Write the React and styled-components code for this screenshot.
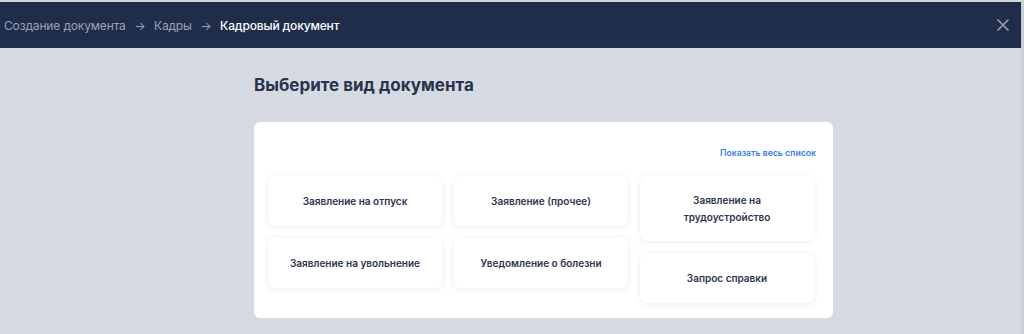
import React from 'react';
import styled, { createGlobalStyle } from 'styled-components';

const Global = createGlobalStyle`
  html, body {
    margin: 0;
    padding: 0;
    font-family: Inter, "Noto Sans", sans-serif;
    background: #d6dae3;
  }
`;

const Page = styled.div`
  height: 334px;
  background: #d6dae3;
  border-top: 2px solid #d4d6db;
  border-right: 3px solid #c9cdd5;
  box-sizing: border-box;
  overflow: hidden;
`;

const Header = styled.header`
  height: 46px;
  background: #1f2c4a;
  display: flex;
  align-items: center;
  justify-content: space-between;
  padding: 0 12px 0 4px;
`;

const Crumbs = styled.nav`
  display: flex;
  align-items: center;
  gap: 8.5px;
  font-size: 12px;
  letter-spacing: -0.15px;
`;

const Crumb = styled.span`
  color: ${(p) => (p.$current ? '#ffffff' : '#9aa3b4')};
  font-weight: ${(p) => (p.$current ? 500 : 400)};
`;

const Arrow = styled.span`
  color: #9aa3b4;
  font-size: 12px;
`;

const Close = styled.button`
  border: 0;
  background: none;
  padding: 0;
  display: flex;
  color: #9aa3b4;
  cursor: pointer;
`;

const Main = styled.main`
  width: 579px;
  margin-left: 254px;
  padding-top: 26px;
`;

const Title = styled.h1`
  margin: 0 0 26px;
  font-size: 17px;
  line-height: 22px;
  font-weight: 700;
  color: #28334d;
`;

const Card = styled.section`
  background: #fff;
  border-radius: 6px;
  padding: 25px 20px 15px 14px;
`;

const LinkRow = styled.div`
  display: flex;
  justify-content: flex-end;
  margin: 0 -3px 17px 0;
`;

const ShowAll = styled.a`
  font-size: 8.7px;
  line-height: 12px;
  font-weight: 600;
  color: #3b7cf0;
  text-decoration: none;
`;

const Grid = styled.div`
  display: grid;
  grid-template-columns: repeat(3, 174px);
  column-gap: 12px;
  align-items: start;
`;

const Column = styled.div`
  display: flex;
  flex-direction: column;
  gap: 12px;
`;

const Tile = styled.button`
  min-height: 50px;
  padding: 16px 12px;
  border: 0;
  border-radius: 7px;
  background: #fff;
  box-shadow: 0 1px 6px rgba(30, 40, 70, 0.09);
  display: flex;
  align-items: center;
  justify-content: center;
  text-align: center;
  font-family: inherit;
  font-size: 10px;
  line-height: 16.5px;
  font-weight: 600;
  color: #2b3550;
  cursor: pointer;
`;

const columns = [
  ['Заявление на отпуск', 'Заявление на увольнение'],
  ['Заявление (прочее)', 'Уведомление о болезни'],
  ['Заявление на трудоустройство', 'Запрос справки'],
];

export default function App() {
  return (
    <Page>
      <Global />
      <Header>
        <Crumbs>
          <Crumb>Создание документа</Crumb>
          <Arrow>→</Arrow>
          <Crumb>Кадры</Crumb>
          <Arrow>→</Arrow>
          <Crumb $current>Кадровый документ</Crumb>
        </Crumbs>
        <Close aria-label="Закрыть">
          <svg width="12" height="12" viewBox="0 0 12 12">
            <path d="M1 1L11 11M11 1L1 11" stroke="currentColor" strokeWidth="1.6" strokeLinecap="round" />
          </svg>
        </Close>
      </Header>
      <Main>
        <Title>Выберите вид документа</Title>
        <Card>
          <LinkRow>
            <ShowAll href="#">Показать весь список</ShowAll>
          </LinkRow>
          <Grid>
            {columns.map((col, i) => (
              <Column key={i}>
                {col.map((name) => (
                  <Tile key={name}>{name}</Tile>
                ))}
              </Column>
            ))}
          </Grid>
        </Card>
      </Main>
    </Page>
  );
}
